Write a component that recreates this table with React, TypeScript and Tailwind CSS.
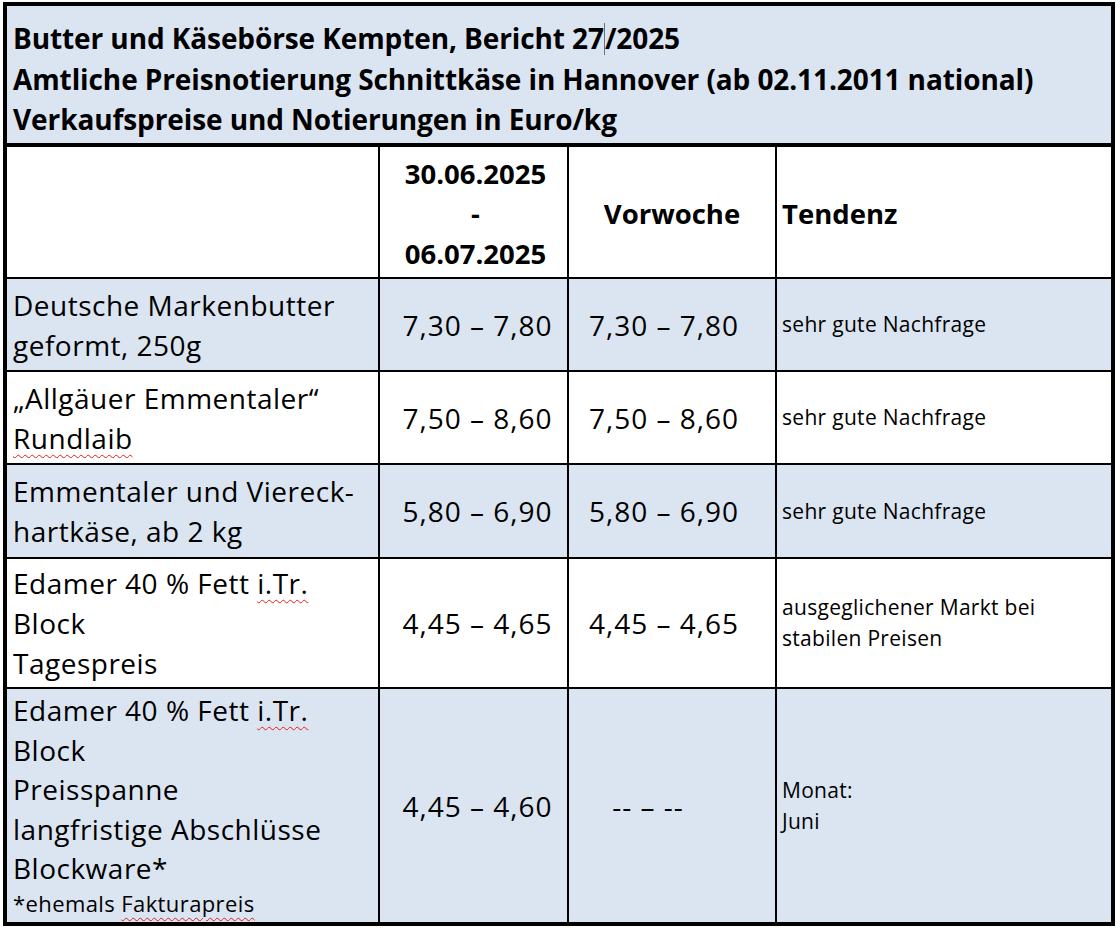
import React from 'react';

type Row = {
  label: React.ReactNode[];
  cur: string;
  prev: string;
  trend: string[];
  blue: boolean;
};

const Squiggle: React.FC<{ children: React.ReactNode }> = ({ children }) => (
  <span className="underline decoration-wavy decoration-[#e0201b] decoration-1 underline-offset-[5px]">
    {children}
  </span>
);

const rows: Row[] = [
  {
    label: ['Deutsche Markenbutter', 'geformt, 250g'],
    cur: '7,30 – 7,80',
    prev: '7,30 – 7,80',
    trend: ['sehr gute Nachfrage'],
    blue: true,
  },
  {
    label: ['„Allgäuer Emmentaler“', <Squiggle key="r">Rundlaib</Squiggle>],
    cur: '7,50 – 8,60',
    prev: '7,50 – 8,60',
    trend: ['sehr gute Nachfrage'],
    blue: false,
  },
  {
    label: ['Emmentaler und Viereck-', 'hartkäse, ab 2 kg'],
    cur: '5,80 – 6,90',
    prev: '5,80 – 6,90',
    trend: ['sehr gute Nachfrage'],
    blue: true,
  },
  {
    label: [
      <span key="e">
        Edamer 40 % Fett <Squiggle>i.Tr.</Squiggle>
      </span>,
      'Block',
      'Tagespreis',
    ],
    cur: '4,45 – 4,65',
    prev: '4,45 – 4,65',
    trend: ['ausgeglichener Markt bei', 'stabilen Preisen'],
    blue: false,
  },
];

const font = { fontFamily: '"Open Sans", "Noto Sans", sans-serif' };

export default function App() {
  return (
    <div className="bg-white min-h-[930px] pt-[2px] pl-[3px] text-black" style={font}>
      <div className="w-[1112px] h-[924px] border-[4px] border-black flex flex-col overflow-hidden">
        {/* title block */}
        <div className="h-[141px] shrink-0 bg-[#dbe5f1] border-b-[4px] border-black pl-[6px] pt-[12px] font-bold text-[28px] leading-[40.5px] tracking-[-0.1px]">
          <div>
            Butter und Käsebörse Kempten, Bericht 27
            <span className="inline-block w-px h-[32px] bg-gray-500 align-[-6px]" />
            /2025
          </div>
          <div>Amtliche Preisnotierung Schnittkäse in Hannover (ab 02.11.2011 national)</div>
          <div>Verkaufspreise und Notierungen in Euro/kg</div>
        </div>

        <div className="flex-1 min-h-0 grid grid-cols-[371px_189px_208px_1fr] grid-rows-[130px_93px_93px_94px_130px_minmax(0,1fr)]">
          {/* header row */}
          <div className="bg-white" />
          <div className="border-l-2 border-black flex flex-col items-center justify-center font-bold text-[27.5px] leading-[40px] pt-[4px] pl-[4px]">
            <span>30.06.2025</span>
            <span>-</span>
            <span>06.07.2025</span>
          </div>
          <div className="border-l-2 border-black flex items-center justify-center font-bold text-[27.5px] pt-[4px]">
            Vorwoche
          </div>
          <div className="border-l-2 border-black flex items-center pl-[5px] font-bold text-[27.5px] pt-[4px]">
            Tendenz
          </div>

          {rows.map((r, i) => {
            const bg = r.blue ? 'bg-[#dbe5f1]' : 'bg-white';
            return (
              <React.Fragment key={i}>
                <div className={`${bg} border-t-2 border-black flex flex-col justify-center pl-[6px] text-[28px] leading-[40px] tracking-[0.5px]`}>
                  {r.label.map((l, j) => (
                    <span key={j}>{l}</span>
                  ))}
                </div>
                <div className={`${bg} border-t-2 border-l-2 border-black flex items-center justify-center text-[28px] tracking-[1px] pl-[8px]`}>
                  {r.cur}
                </div>
                <div className={`${bg} border-t-2 border-l-2 border-black flex items-center justify-center text-[28px] tracking-[1px] pr-[16px]`}>
                  {r.prev}
                </div>
                <div className={`${bg} border-t-2 border-l-2 border-black flex flex-col justify-center pl-[5px] text-[21px] leading-[31px] tracking-[0.3px]`}>
                  {r.trend.map((t, j) => (
                    <span key={j}>{t}</span>
                  ))}
                </div>
              </React.Fragment>
            );
          })}

          {/* last row */}
          <div className="bg-[#dbe5f1] border-t-2 border-black flex flex-col pl-[6px] pt-[2px] text-[28px] leading-[39.5px] tracking-[0.5px] overflow-hidden">
            <span>
              Edamer 40 % Fett <Squiggle>i.Tr.</Squiggle>
            </span>
            <span>Block</span>
            <span>Preisspanne</span>
            <span>langfristige Abschlüsse</span>
            <span>Blockware*</span>
            <span className="text-[22px] leading-[28px] tracking-[0.4px]">
              *ehemals <Squiggle>Fakturapreis</Squiggle>
            </span>
          </div>
          <div className="bg-[#dbe5f1] border-t-2 border-l-2 border-black flex items-center justify-center text-[28px] tracking-[1px] pl-[8px]">
            4,45 – 4,60
          </div>
          <div className="bg-[#dbe5f1] border-t-2 border-l-2 border-black flex items-center justify-center text-[28px] tracking-[1px] pr-[48px]">
            -- – --
          </div>
          <div className="bg-[#dbe5f1] border-t-2 border-l-2 border-black flex flex-col justify-center pl-[5px] text-[21px] leading-[31px] tracking-[0.3px]">
            <span>Monat:</span>
            <span>Juni</span>
          </div>
        </div>
      </div>
    </div>
  );
}
